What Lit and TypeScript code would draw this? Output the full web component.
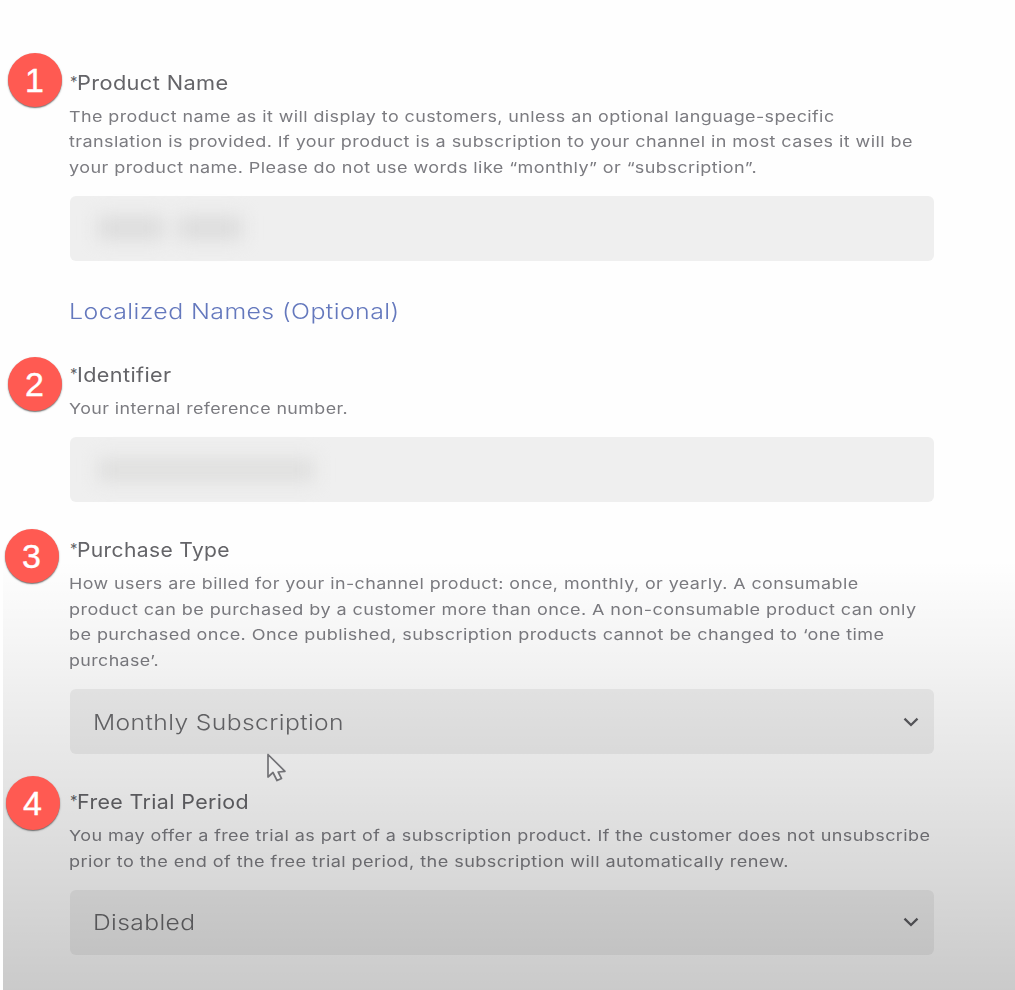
import { LitElement, html, css, svg, nothing } from "lit";
import { customElement, property } from "lit/decorators.js";
import { styleMap } from "lit/directives/style-map.js";

const pen = document.createElement("canvas").getContext("2d")!;
const TRACK = 0.35;

/** Horizontal stretch that sets a line of tracked text to a given measure. */
function stretch(text: string, font: string, width: number): string {
  pen.font = `${font} Inter, sans-serif`;
  const natural = pen.measureText(text).width + TRACK * text.length;
  return `scaleX(${(width / natural).toFixed(4)})`;
}

type Line = [text: string, width: number];

@customElement("fit-line")
class FitLine extends LitElement {
  @property() text = "";
  @property() font = "";
  @property({ type: Number }) measure = 0;

  static styles = css`
    :host { display: block; white-space: nowrap; }
    .run { display: block; width: max-content; letter-spacing: 0.35px; transform-origin: 0 50%; }
  `;

  render() {
    const s = { transform: stretch(this.text, this.font, this.measure) };
    return html`<span class="run" style=${styleMap(s)}>${this.text}</span>`;
  }
}

@customElement("step-badge")
class StepBadge extends LitElement {
  @property() n = "";

  static styles = css`
    :host {
      display: flex;
      align-items: center;
      justify-content: center;
      width: 54px;
      height: 54px;
      border-radius: 50%;
      background: #ff5a52;
      box-shadow: 0 1px 1.5px rgba(60, 60, 60, 0.75);
      color: #fff;
      font: 34px/54px "Liberation Sans", Arial, sans-serif;
      -webkit-text-stroke: 0.4px #fff;
    }
  `;

  render() {
    return html`${this.n}`;
  }
}

@customElement("form-field")
class FormField extends LitElement {
  @property() n = "";
  @property({ attribute: false }) heading: Line = ["", 0];
  @property({ attribute: false }) lines: Line[] = [];
  @property({ attribute: false }) value: Line | null = null;
  @property() redacted = "";

  static styles = css`
    :host { display: block; position: relative; }
    .badge { position: absolute; z-index: 3; left: -62.5px; top: -17.5px; }
    .b2 { top: -6px; }
    .b3 { left: -65.5px; top: -9px; }
    .b4 { left: -64.5px; top: -14px; }
    .title { display: flex; height: 24px; font: 400 20px/24px Inter, sans-serif; color: #646468; }
    .star { width: 7px; font-size: 15px; line-height: 21px; }
    .desc {
      margin: 9px 0 15.5px -1px;
      font: 400 15px/25.5px Inter, sans-serif;
      color: #7b7b80;
    }
    .box {
      display: flex;
      align-items: center;
      justify-content: space-between;
      box-sizing: border-box;
      height: 65.5px;
      padding: 0 15px 0 23px;
      border-radius: 6px;
      background: #efefef;
      font: 300 22px/28px Inter, sans-serif;
      color: #68686b;
    }
    .chevron { width: 16px; height: 10px; }
    .smudges { display: flex; gap: 14px; padding-left: 5px; filter: blur(9px); }
    .smudge { height: 24px; background: #dcdcdc; }
    .name1 { width: 66px; }
    .name2 { width: 64px; }
    .ident { width: 216px; background: #dfdfde; }
  `;

  render() {
    return html`
      <step-badge class="badge b${this.n}" n=${this.n}></step-badge>
      <div class="title">
        <span class="star">*</span>
        <fit-line font="400 20px" .text=${this.heading[0]} .measure=${this.heading[1]}></fit-line>
      </div>
      <div class="desc">
        ${this.lines.map(
          ([t, w]) => html`<fit-line font="400 15px" .text=${t} .measure=${w}></fit-line>`
        )}
      </div>
      <div class="box">
        ${this.value
          ? html`<fit-line font="300 22px" .text=${this.value[0]} .measure=${this.value[1]}></fit-line>
              <svg class="chevron" viewBox="0 0 16 10">
                ${svg`<path d="M1.5 1.6 8 8 14.5 1.6" fill="none" stroke="#5c5c60" stroke-width="2.3"/>`}
              </svg>`
          : nothing}
        ${this.redacted === "name"
          ? html`<div class="smudges"><i class="smudge name1"></i><i class="smudge name2"></i></div>`
          : nothing}
        ${this.redacted === "ident"
          ? html`<div class="smudges"><i class="smudge ident"></i></div>`
          : nothing}
      </div>
    `;
  }
}

@customElement("app-root")
class AppRoot extends LitElement {
  static styles = css`
    :host {
      display: block;
      position: relative;
      box-sizing: border-box;
      width: 1015px;
      height: 990px;
      overflow: hidden;
      padding: 70.5px 81px 0 70px;
      background: #fefefe;
    }
    .form { display: flex; flex-direction: column; gap: 35.8px; }
    .link { margin: 0 0 2.4px -1.3px; font: 300 22px/28px Inter, sans-serif; color: #6478bd; }
    .shade {
      position: absolute;
      z-index: 1;
      inset: 560px 0 0 3px;
      pointer-events: none;
      background: linear-gradient(
        rgba(0, 0, 0, 0) 0,
        rgba(0, 0, 0, 0.035) 80px,
        rgba(0, 0, 0, 0.075) 160px,
        rgba(0, 0, 0, 0.105) 230px,
        rgba(0, 0, 0, 0.15) 320px,
        rgba(0, 0, 0, 0.205) 430px
      );
    }
    .cursor { position: absolute; z-index: 2; left: 266px; top: 752px; width: 22px; height: 32px; }
  `;

  render() {
    return html`
      <div class="form">
        <form-field
          n="1"
          redacted="name"
          .heading=${["Product Name", 151.5]}
          .lines=${[
            ["The product name as it will display to customers, unless an optional language-specific", 765.5],
            ["translation is provided. If your product is a subscription to your channel in most cases it will be", 844],
            ["your product name. Please do not use words like \u201cmonthly\u201d or \u201csubscription\u201d.", 688],
          ]}
        ></form-field>
        <fit-line class="link" font="300 22px" text="Localized Names (Optional)" measure="330.5"></fit-line>
        <form-field
          n="2"
          redacted="ident"
          .heading=${["Identifier", 94.5]}
          .lines=${[["Your internal reference number.", 279]]}
        ></form-field>
        <form-field
          n="3"
          .heading=${["Purchase Type", 153]}
          .lines=${[
            ["How users are billed for your in-channel product: once, monthly, or yearly. A consumable", 789.5],
            ["product can be purchased by a customer more than once. A non-consumable product can only", 847.5],
            ["be purchased once. Once published, subscription products cannot be changed to \u2018one time", 815.5],
            ["purchase\u2019.", 90],
          ]}
          .value=${["Monthly Subscription", 251]}
        ></form-field>
        <form-field
          n="4"
          .heading=${["Free Trial Period", 172]}
          .lines=${[
            ["You may offer a free trial as part of a subscription product. If the customer does not unsubscribe", 861.5],
            ["prior to the end of the free trial period, the subscription will automatically renew.", 720],
          ]}
          .value=${["Disabled", 102.5]}
        ></form-field>
      </div>
      <div class="shade"></div>
      <svg class="cursor" viewBox="0 0 22 32">
        <path
          d="M2 2.5V25l5-4.5L11 28.5l4.5-2-3.3-6.5 6.8-.7Z"
          fill="#ececec" stroke="#727276" stroke-width="1.7" stroke-linejoin="round"
        />
      </svg>
    `;
  }
}
